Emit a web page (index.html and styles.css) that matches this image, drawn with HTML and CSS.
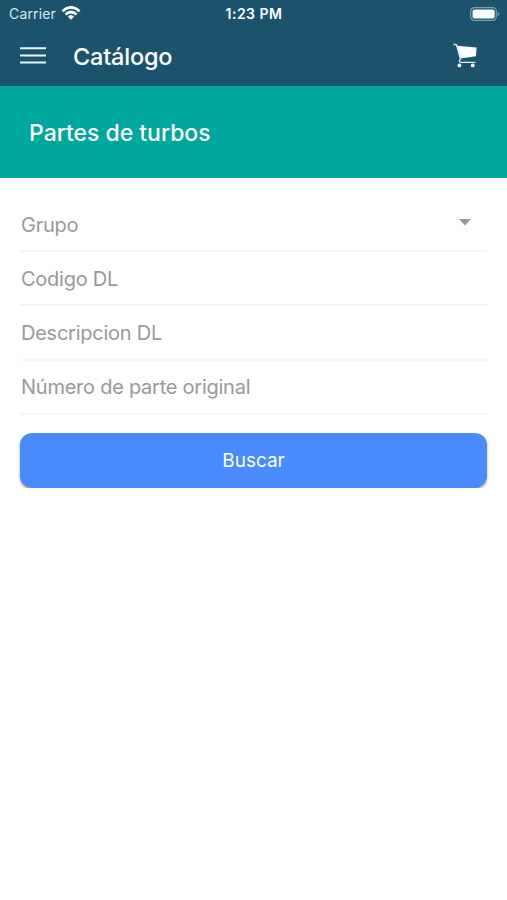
FILE: index.html
```html
<!DOCTYPE html>
<html lang="es">
<head>
<meta charset="utf-8">
<title>Catálogo</title>
<link rel="stylesheet" href="styles.css">
</head>
<body>
<header class="header">
  <div class="status">
    <div class="carrier"><span class="carrier-name">Carrier</span>
      <svg class="wifi" width="20" height="14" viewBox="0 0 20 14" fill="none" stroke="#fff" stroke-width="2.8"><path d="M1.4 5.3Q10-2.5 18.6 5.3M4.5 8.5Q10 3.4 15.5 8.5"/><path d="M6.8 10.6Q10 7.5 13.2 10.6L10 13.8Z" fill="#fff" stroke="none"/></svg>
    </div>
    <span class="clock">1:23 PM</span>
    <svg class="battery" width="30" height="14" viewBox="0 0 30 14"><rect x=".7" y=".7" width="25.6" height="12.6" rx="3.6" fill="none" stroke="#7d9eb0" stroke-width="1.2"/><rect x="2.6" y="2.5" width="22" height="9" rx="1.8" fill="#fff"/><path d="M27.6 4.7Q31 7 27.6 9.3Z" fill="#7d9eb0"/></svg>
  </div>
  <div class="toolbar">
    <svg class="menu" width="26" height="17" viewBox="0 0 26 17" fill="none" stroke="#e9f5f8" stroke-width="2"><path d="M0 1.2H26M0 8.5H26M0 15.6H26"/></svg>
    <h1 class="title">Catálogo</h1>
    <svg class="cart" width="25" height="25" viewBox="0 0 25 25" fill="#fff"><path d="M4 2.8 23.6 4.6 22.9 13.2 7.4 15.6Z"/><path d="M.6 1.2 3.5 1.8 7.4 15.6 6.4 17.8Q6.5 19.4 8.2 19.4H22.4" fill="none" stroke="#dfeef4" stroke-width="1.4"/><circle cx="6.4" cy="22.4" r="1.9"/><circle cx="19.8" cy="22.4" r="1.9"/></svg>
  </div>
</header>
<section class="banner"><h2 class="banner-title">Partes de turbos</h2></section>
<main class="form">
  <div class="field"><span class="label grupo">Grupo</span><svg class="caret" width="12" height="7" viewBox="0 0 12 7"><path d="M0 0H12L6 6.5Z" fill="#999"/></svg></div>
  <div class="field"><span class="label codigo">Codigo DL</span></div>
  <div class="field"><span class="label descripcion">Descripcion DL</span></div>
  <div class="field"><span class="label numero">Número de parte original</span></div>
  <button class="search" type="button">Buscar</button>
</main>
</body>
</html>
```
FILE: styles.css
```css
* { box-sizing: border-box; }
body {
  margin: 0;
  background: #fff;
  font-family: Inter, "Liberation Sans", sans-serif;
}
svg { display: block; flex: none; }
.header { height: 86px; background: #1b536d; color: #fff; }
.status {
  display: grid;
  grid-template-columns: 1fr auto 1fr;
  align-items: center;
  height: 27px;
  padding: 0 7px 0 9px;
}
.carrier { display: flex; align-items: center; gap: 5px; }
.carrier-name { font-size: 14px; color: #d9e9ef; letter-spacing: .15px; }
.wifi { margin-top: -2px; }
.clock { margin-left: -1px; font-size: 14px; font-weight: 600; letter-spacing: .5px; }
.battery { justify-self: end; }
.toolbar { display: flex; align-items: center; height: 57px; padding: 0 29px 0 20px; }
.title { margin: 2px 0 0 27px; font-size: 23.5px; font-weight: 500; letter-spacing: -.2px; }
.cart { margin-left: auto; }
.banner {
  display: flex;
  align-items: center;
  height: 92px;
  padding: 0 29px;
  background: #00a79d;
  color: #fff;
}
.banner-title { margin: 2px 0 0; font-size: 23px; font-weight: 500; letter-spacing: -.02px; }
.form { padding: 20px 20px 0; }
.field {
  display: flex;
  align-items: center;
  justify-content: space-between;
  height: 54.2px;
  padding: 1px 16px 0 1px;
  border-bottom: 2px solid #f5f5f5;
}
.label { font-size: 20px; color: #999; letter-spacing: -.25px; }
.caret { margin-top: -4px; }
.search {
  display: block;
  width: 100%;
  height: 55px;
  margin-top: 18px;
  padding: 0;
  border: 0;
  border-radius: 12px;
  background: #488aff;
  box-shadow: 0 2px 3px rgba(0, 0, 0, .3);
  color: #fff;
  font: 400 19px Inter, "Liberation Sans", sans-serif;
}
```
